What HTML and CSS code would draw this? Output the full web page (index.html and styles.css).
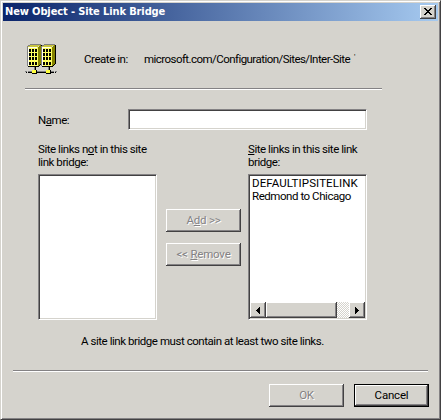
FILE: index.html
```html
<!DOCTYPE html>
<html lang="en">
<head>
<meta charset="utf-8">
<title>New Object - Site Link Bridge</title>
<link rel="stylesheet" href="styles.css">
</head>
<body>
<main class="dialog">
  <header class="titlebar">
    <h1>New Object - Site Link Bridge</h1>
    <button class="close" aria-label="Close"><svg width="8" height="7" viewBox="0 0 8 7" shape-rendering="crispEdges"><path d="M0 0h2v1h1v1h2v-1h1v-1h2v1h-1v1h-1v1h-1v1h1v1h1v1h1v1h-2v-1h-1v-1h-2v1h-1v1h-2v-1h1v-1h1v-1h1v-1h-1v-1h-1v-1h-1z"/></svg></button>
  </header>
  <section class="origin">
    <svg class="icon" width="32" height="32" viewBox="0 0 32 32" shape-rendering="crispEdges">
      <defs>
        <g id="building">
          <path fill="#808080" d="M0 3h1v-1h2v-1h11v1h-11v1h-2v1h-1z"/>
          <path fill="#c8c440" d="M1 3h2v-1h10v1h-2v1h-10z"/>
          <path fill="#000" d="M14 2h1v19h-1v1h-1v1h-1v1h-11v-1h11v-1h1v-1h1z"/>
          <path fill="#848200" d="M11 4h1v-1h1v-1h1v19h-1v1h-1v1h-1z"/>
          <path fill="#808080" d="M0 4h1v19h-1z"/>
          <path fill="#ffff62" d="M1 4h10v19h-10z"/>
          <path fill="#fffff0" d="M1 4h1v19h-1zM1 4h9v1h-9z"/>
          <path fill="#000" d="M2 6h2v3h-2zM5 6h2v3h-2zM8 6h2v3h-2zM2 10h2v3h-2zM5 10h2v3h-2zM8 10h2v3h-2zM2 14h2v3h-2zM5 14h2v3h-2zM8 14h2v3h-2zM2 19h2v3h-2zM5 19h2v3h-2zM8 19h2v3h-2z"/>
          <path fill="#808080" d="M7 24h1v3h-1z"/>
          <path fill="#000" d="M8 24h1v3h-1z"/>
        </g>
      </defs>
      <use href="#building" x="2"/>
      <use href="#building" x="16"/>
      <path fill="#808080" d="M0 28h2v1h-2zM3 28h26v1h-26zM30 28h2v1h-2z"/>
      <path fill="#000" d="M1 29h1v1h-1zM3 29h26v1h-26zM30 29h1v1h-1zM7 27h5v4h-5zM21 27h5v4h-5z"/>
      <path fill="#ffff40" d="M7 27h4v3h-4zM21 27h4v3h-4z"/>
    </svg>
    <span class="create">Create in:</span>
    <span class="path">microsoft.com/Configuration/Sites/Inter-Site</span><span class="tick">'</span>
  </section>
  <hr class="rule top">
  <div class="name-row">
    <label for="name">N<u>a</u>me:</label>
    <input id="name" class="sunken" type="text">
  </div>
  <section class="lists">
    <div class="column">
      <p class="caption">Site links n<u>o</u>t in this site<br>link bridge:</p>
      <div class="listbox sunken"></div>
    </div>
    <div class="actions">
      <button class="btn" disabled>A<u>d</u>d &gt;&gt;</button>
      <button class="btn" disabled>&lt;&lt; <u>R</u>emove</button>
    </div>
    <div class="column">
      <p class="caption"><u>S</u>ite links in this site link<br>bridge:</p>
      <div class="listbox sunken">
        <ul>
          <li class="caps">DEFAULTIPSITELINK</li>
          <li>Redmond to Chicago</li>
        </ul>
        <div class="scrollbar">
          <span class="arrow"><svg width="4" height="7" viewBox="0 0 4 7" shape-rendering="crispEdges"><path d="M3 0h1v7h-1v-1h-1v-1h-1v-1h-1v-1h1v-1h1v-1h1z"/></svg></span>
          <span class="thumb"></span>
          <span class="track"></span>
          <span class="arrow"><svg width="4" height="7" viewBox="0 0 4 7" shape-rendering="crispEdges"><path d="M0 0h1v1h1v1h1v1h1v1h-1v1h-1v1h-1v1h-1z"/></svg></span>
        </div>
      </div>
    </div>
  </section>
  <p class="note">A site link bridge must contain at least two site links.</p>
  <hr class="rule bottom">
  <footer>
    <button class="btn" disabled>OK</button>
    <button class="btn default">Cancel</button>
  </footer>
</main>
</body>
</html>
```
FILE: styles.css
```css
* { box-sizing: border-box; }
body {
  margin: 0;
  background: #d5d3cd;
  color: #000;
  font: 11.5px/13px Roboto, "Liberation Sans", sans-serif;
  letter-spacing: -0.45px;
}
p, h1, ul, hr { margin: 0; padding: 0; }
u { text-underline-offset: 1px; text-decoration-thickness: 1px; text-decoration-skip-ink: none; }
.dialog {
  width: 441px;
  height: 420px;
  padding: 1px;
  overflow: hidden;
  border: 1px solid;
  border-color: #d5d3cd #424142 #424142 #d5d3cd;
  box-shadow: inset 1px 1px #fff, inset -1px -1px #848284;
}
.titlebar {
  display: flex;
  align-items: center;
  justify-content: space-between;
  height: 18px;
  margin: 1px 1px 0;
  padding: 0 2px;
  background: linear-gradient(90deg, #0a246a, #a6caf0);
}
.titlebar h1 {
  color: #fff;
  font: bold 11px/18px "DejaVu Sans Condensed", "DejaVu Sans", sans-serif;
  letter-spacing: -0.12px;
  white-space: nowrap;
}
.close {
  display: grid;
  place-items: center;
  width: 16px;
  height: 14px;
  padding: 0 1px 1px 0;
  border: 0;
  background: #d5d3cd;
  box-shadow: inset -1px -1px #424142, inset 1px 1px #fff, inset -2px -2px #848284;
}
.origin {
  display: flex;
  height: 67px;
  padding: 22px 0 0 23px;
  white-space: nowrap;
}
.icon { flex: none; }
.create { width: 60px; margin: 10px 0 0 27px; }
.path { width: 210px; margin-top: 10px; letter-spacing: -0.55px; }
.tick { margin-top: 7px; font-size: 8px; }
.rule { height: 2px; border: 0; border-top: 1px solid #848284; border-bottom: 1px solid #fff; }
.top { margin: 0 57px 0 23px; }
.name-row { display: flex; height: 21px; margin: 19px 0 0 36px; }
.name-row label { width: 90px; padding-top: 5px; }
.sunken {
  border: 1px solid;
  border-color: #848284 #fff #fff #848284;
  background: #fff;
  box-shadow: inset 1px 1px #424142, inset -1px -1px #d5d3cd;
}
.name-row input { width: 239px; height: 21px; padding: 2px; outline: 0; font: inherit; }
.lists { display: flex; margin: 13px 0 0 36px; }
.column { width: 119px; white-space: nowrap; }
.caption { height: 31px; }
.listbox { height: 146px; padding: 1px; display: flex; flex-direction: column; justify-content: space-between; }
.listbox ul { list-style: none; padding: 1px 0 0 2px; }
.caps { letter-spacing: 0.1px; }
.scrollbar { display: flex; height: 16px; }
.arrow, .thumb, .btn {
  background: #d5d3cd;
  box-shadow: inset -1px -1px #424142, inset 1px 1px #fff, inset -2px -2px #848284;
}
.arrow { display: grid; place-items: center; width: 16px; padding-right: 1px; }
.thumb { width: 71px; }
.track { flex: 1; background: repeating-conic-gradient(#fff 0 25%, #d5d3cd 0 50%) 0 0 / 2px 2px; }
.actions { display: flex; flex-direction: column; gap: 11px; width: 91px; padding: 66px 7px 0 9px; }
.btn {
  width: 75px;
  height: 23px;
  padding: 0 0 1px;
  border: 0;
  color: #000;
  font: inherit;
  letter-spacing: -0.2px;
  white-space: nowrap;
}
.btn:disabled { color: #848284; text-shadow: 1px 1px #fff; }
.note { margin: 15px 0 0 79px; white-space: nowrap; }
.bottom { margin: 22px 11px 0; }
footer { display: flex; justify-content: flex-end; gap: 10px; padding: 12px 10px 0 0; }
.default { border: 1px solid #000; }
```
